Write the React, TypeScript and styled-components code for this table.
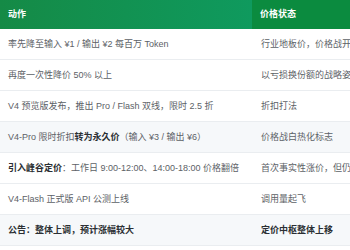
import React from 'react';
import styled, {createGlobalStyle} from 'styled-components';

type Row = {
    action: React.ReactNode
    status: React.ReactNode
    shaded?: boolean
    strong?: boolean
}

const rows: Row[] = [
    {action: '率先降至输入 ¥1 / 输出 ¥2 每百万 Token', status: '行业地板价，价格战开启'},
    {action: '再度一次性降价 50% 以上', status: '以亏损换份额的战略姿态'},
    {action: 'V4 预览版发布，推出 Pro / Flash 双线，限时 2.5 折', status: '折扣打法'},
    {
        action: <>V4-Pro 限时折扣<b>转为永久价</b>（输入 ¥3 / 输出 ¥6）</>,
        status: '价格战白热化标志',
        shaded: true
    },
    {
        action: <><b>引入峰谷定价</b>：工作日 9:00-12:00、14:00-18:00 价格翻倍</>,
        status: '首次事实性涨价，但仍低于行业均价'
    },
    {action: 'V4-Flash 正式版 API 公测上线', status: '调用量起飞'},
    {action: '公告：整体上调，预计涨幅较大', status: '定价中枢整体上移', shaded: true, strong: true},
]

export default function App() {
    return (
        <>
            <GlobalStyle/>
            <Frame>
                <Table>
                    <colgroup>
                        <col style={{width: 252}}/>
                        <col style={{width: 220}}/>
                    </colgroup>
                    <thead>
                    <tr>
                        <HeadCell>动作</HeadCell>
                        <HeadCell $dark>价格状态</HeadCell>
                    </tr>
                    </thead>
                    <tbody>
                    {rows.map((r, i) => (
                        <BodyRow key={i} $shaded={r.shaded} $strong={r.strong}>
                            <Cell>{r.action}</Cell>
                            <Cell $right>{r.status}</Cell>
                        </BodyRow>
                    ))}
                    </tbody>
                </Table>
            </Frame>
        </>
    );
}

const GlobalStyle = createGlobalStyle`
  html, body {
    margin: 0;
    padding: 0;
    background: #fff;
  }
  body {
    font-family: "Liberation Sans", "Noto Sans CJK SC", sans-serif;
  }
`

const Frame = styled.div`
  width: 350px;
  height: 250px;
  overflow: hidden;
`

const Table = styled.table`
  border-collapse: collapse;
  table-layout: fixed;
  width: 472px;
  font-size: 9px;
  line-height: 13px;
`

const HeadCell = styled.th<{ $dark?: boolean }>`
  text-align: left;
  font-weight: 700;
  color: #fff;
  padding: 8px 8px 8px 8px;
  height: 13px;
  white-space: nowrap;
  background: ${p => p.$dark ? '#0b8b3f' : 'linear-gradient(90deg, #158a46 0%, #0f9a5e 100%)'};
`

const BodyRow = styled.tr<{ $shaded?: boolean; $strong?: boolean }>`
  background: ${p => p.$shaded ? '#f6f8fa' : '#fff'};
  border-bottom: 1px solid #eaedf0;
  color: ${p => p.$strong ? '#2b2f33' : '#5c6166'};
  font-weight: ${p => p.$strong ? 700 : 400};

  b {
    font-weight: 700;
    color: #2b2f33;
  }
`

const Cell = styled.td<{ $right?: boolean }>`
  padding: 9px 8px 8px ${p => p.$right ? '9px' : '8px'};
  white-space: nowrap;
  overflow: hidden;
`
